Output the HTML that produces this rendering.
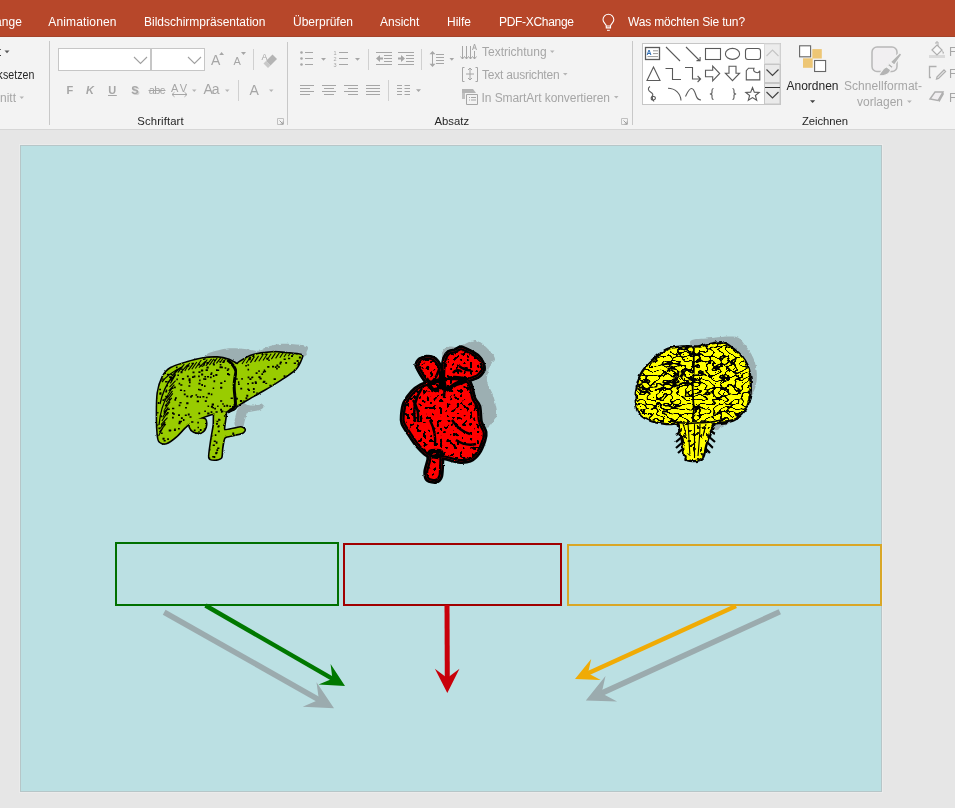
<!DOCTYPE html>
<html><head><meta charset="utf-8">
<style>
*{margin:0;padding:0;box-sizing:border-box}
html,body{width:955px;height:808px;overflow:hidden;background:#E6E6E6;font-family:"Liberation Sans",sans-serif}
#tabs{position:absolute;left:0;top:0;width:955px;height:37px;background:#B7472A;border-bottom:1px solid #A4432A;color:#fff;font-size:12px}
#tabs span{position:absolute;top:15px;white-space:nowrap}
#ribbon{position:absolute;left:0;top:37px;width:955px;height:93px;background:#F3F3F3;border-bottom:1px solid #D6D6D6}
.t{position:absolute;white-space:nowrap;font-size:12px;color:#262626}
.g{color:#A6A6A6}
.sep{position:absolute;width:1px;background:#C6C6C6}
.gl{position:absolute;font-size:11px;color:#262626;white-space:nowrap}
#slide{position:absolute;left:20px;top:145px;width:862px;height:647px;background:#BBE0E3;border:1px solid #B6C6C8;box-shadow:0 0 0 1px #EBEBEB}
svg{position:absolute;left:0;top:0;overflow:visible;will-change:transform}
#tabs{will-change:transform}
</style></head><body>
<div id="tabs">
<span style="left:-4.9px">ange</span>
<span style="left:48.3px;letter-spacing:0.15px">Animationen</span>
<span style="left:144px">Bildschirmpräsentation</span>
<span style="left:293px">Überprüfen</span>
<span style="left:380px">Ansicht</span>
<span style="left:447px">Hilfe</span>
<span style="left:499px;letter-spacing:-0.3px">PDF-XChange</span>
<span style="left:628px;letter-spacing:-0.17px">Was möchten Sie tun?</span>
<svg width="30" height="30" style="position:absolute;left:595px;top:8px" viewBox="595 8 30 30"><path d="M606.3 26c0-1.8-3.3-3.4-3.3-6.3a5.4 5.4 0 0 1 10.8 0c0 2.900-3.300 4.500-3.3 6.3z" fill="none" stroke="#fff" stroke-width="1.1"/><path d="M606.3 26v1.9h4.200v-1.9" fill="none" stroke="#fff" stroke-width="1.1"/><path d="M607 30.3h2.8" stroke="#fff" stroke-width="1"/></svg>
</div>
<div id="ribbon"></div>
<svg id="rib" width="955" height="130" viewBox="0 0 955 130" style="position:absolute;left:0;top:0">
<g font-family="Liberation Sans" font-size="12">
<!-- clipboard partial -->
<text x="1" y="56" fill="#262626" text-anchor="end">Layout</text>
<path d="M4.5 50.5h5l-2.5 2.8z" fill="#595959"/>
<text x="-3.3" y="78.6" fill="#262626">k</text><text x="3" y="78.6" fill="#262626" textLength="31.3" lengthAdjust="spacingAndGlyphs">setzen</text>
<text x="16" y="101.5" fill="#A6A6A6" text-anchor="end">Abschnitt</text>
<path d="M19.5 96.5h4.5l-2.25 2.6z" fill="#B5B5B5"/>
<rect x="49" y="41" width="1" height="84" fill="#C8C8C8"/>

<!-- Schriftart group -->
<rect x="58.5" y="48.5" width="92" height="22" fill="#fff" stroke="#C6C6C6"/>
<rect x="151.5" y="48.5" width="53" height="22" fill="#fff" stroke="#C6C6C6"/>
<path d="M134 57l6.5 6.5l6.5-6.5" fill="none" stroke="#A0A0A0" stroke-width="1.1"/>
<path d="M188 57l6.5 6.5l6.5-6.5" fill="none" stroke="#A0A0A0" stroke-width="1.1"/>
<text x="211" y="65.3" font-size="14" fill="#A6A6A6">A</text>
<path d="M219.2 55h4.8l-2.4-2.9z" fill="#A6A6A6"/>
<text x="233.5" y="65.3" font-size="11" fill="#A6A6A6">A</text>
<path d="M241 52h5l-2.5 2.9z" fill="#A6A6A6"/>
<rect x="253" y="49" width="1" height="21" fill="#D0D0D0"/>
<text x="261.5" y="60" font-size="9" fill="#A6A6A6">A</text>
<path d="M266 61l6.5-6.5l4.5 4.5l-6.5 6.5z" fill="#B4B4B4"/>
<path d="M263.5 63.5l2.5-2.5l4.5 4.5l-2.5 2.5z" fill="#C8C8C8"/>

<text x="66.5" y="93.8" font-size="11" font-weight="bold" fill="#A6A6A6">F</text>
<text x="86" y="93.8" font-size="11" font-weight="bold" font-style="italic" fill="#A6A6A6">K</text>
<text x="108.2" y="93.8" font-size="11" font-weight="bold" fill="#A6A6A6">U</text>
<rect x="108" y="95" width="8.8" height="1" fill="#A6A6A6"/>
<text x="132.5" y="95" font-size="11" font-weight="bold" fill="#D0D0D0">S</text>
<text x="131.3" y="93.8" font-size="11" font-weight="bold" fill="#A6A6A6">S</text>
<text x="148.8" y="93.8" font-size="11" fill="#A6A6A6" textLength="16.5">abc</text>
<rect x="148.5" y="90" width="17" height="1" fill="#A6A6A6"/>
<text x="171" y="92" font-size="11" fill="#A6A6A6" textLength="16">AV</text>
<path d="M172 94.5h15M174.5 92.2l-2.5 2.3l2.5 2.3M184.5 92.2l2.5 2.3l-2.5 2.3" fill="none" stroke="#A6A6A6" stroke-width="1"/>
<path d="M192 89.5h4.5l-2.25 2.5z" fill="#B5B5B5"/>
<text x="203.5" y="94" font-size="14" fill="#A6A6A6" textLength="16">Aa</text>
<path d="M225 89.5h4.5l-2.25 2.5z" fill="#B5B5B5"/>
<rect x="238" y="80" width="1" height="21" fill="#D0D0D0"/>
<text x="249.5" y="95.3" font-size="14" fill="#A6A6A6">A</text>
<path d="M269 89.5h4.5l-2.25 2.5z" fill="#B5B5B5"/>
<text x="137.3" y="124.8" font-size="11.3" fill="#262626" textLength="46.3">Schriftart</text>
<path d="M277.5 118.5h6v6h-6z" fill="none" stroke="#C0C0C0" stroke-width="1"/>
<path d="M279.5 120.5l3.5 3.5M283 121.5v2.5h-2.5" fill="none" stroke="#A0A0A0" stroke-width="1"/>
<rect x="287" y="42" width="1" height="83" fill="#C8C8C8"/>

<!-- Absatz group -->
<g fill="#A6A6A6">
<circle cx="301.5" cy="52.5" r="1.3"/><circle cx="301.5" cy="58.5" r="1.3"/><circle cx="301.5" cy="64.5" r="1.3"/>
<rect x="305" y="52" width="8" height="1"/><rect x="305" y="58" width="8" height="1"/><rect x="305" y="64" width="8" height="1"/>
<path d="M321 58h5l-2.5 2.8z"/>
<text x="333.5" y="55" font-size="5.5">1</text><text x="333.5" y="61" font-size="5.5">2</text><text x="333.5" y="67" font-size="5.5">3</text>
<rect x="339" y="52" width="9" height="1"/><rect x="339" y="58" width="9" height="1"/><rect x="339" y="64" width="9" height="1"/>
<path d="M355 58h5l-2.5 2.8z"/>
<rect x="368" y="49" width="1" height="21" fill="#D0D0D0"/>
<rect x="376" y="52" width="16" height="1"/><rect x="384" y="55" width="8" height="1"/><rect x="384" y="58" width="8" height="1"/><rect x="384" y="61" width="8" height="1"/><rect x="376" y="64" width="16" height="1"/>
<path d="M376 58.5l4-3.5v2.500h3v2h-3v2.500z"/>
<rect x="398" y="52" width="16" height="1"/><rect x="406" y="55" width="8" height="1"/><rect x="406" y="58" width="8" height="1"/><rect x="406" y="61" width="8" height="1"/><rect x="398" y="64" width="16" height="1"/>
<path d="M405 58.5l-4-3.5v2.500h-3v2h3v2.500z"/>
<rect x="421" y="49" width="1" height="21" fill="#D0D0D0"/><rect x="432" y="54" width="1" height="10" fill="#A6A6A6"/>
<path d="M432.5 51l-3 3.300h2.500v3h1v-3h2.500zM432.5 67l-3-3.300h2.500v-3h1v3h2.500z"/>
<rect x="436" y="54" width="8" height="1"/><rect x="436" y="57" width="8" height="1"/><rect x="436" y="60" width="8" height="1"/><rect x="436" y="63" width="8" height="1"/>
<path d="M449.5 58h4.6l-2.3 2.7z"/>

<rect x="300" y="85" width="14" height="1"/><rect x="300" y="88" width="10" height="1"/><rect x="300" y="91" width="14" height="1"/><rect x="300" y="94" width="10" height="1"/>
<rect x="322" y="85" width="14" height="1"/><rect x="324" y="88" width="10" height="1"/><rect x="322" y="91" width="14" height="1"/><rect x="324" y="94" width="10" height="1"/>
<rect x="344" y="85" width="14" height="1"/><rect x="348" y="88" width="10" height="1"/><rect x="344" y="91" width="14" height="1"/><rect x="348" y="94" width="10" height="1"/>
<rect x="366" y="85" width="14" height="1"/><rect x="366" y="88" width="14" height="1"/><rect x="366" y="91" width="14" height="1"/><rect x="366" y="94" width="14" height="1"/>
<rect x="388" y="80" width="1" height="21" fill="#D0D0D0"/>
<rect x="397" y="85" width="5" height="1"/><rect x="404.5" y="85" width="5.5" height="1"/><rect x="397" y="88" width="5" height="1"/><rect x="404.5" y="88" width="5.5" height="1"/><rect x="397" y="91" width="5" height="1"/><rect x="404.5" y="91" width="5.5" height="1"/><rect x="397" y="94" width="5" height="1"/><rect x="404.5" y="94" width="5.5" height="1"/>
<path d="M416 89.2h5l-2.5 2.8z"/>
</g>
<g fill="none" stroke="#A6A6A6" stroke-width="1">
<path d="M462.5 46v13M466.5 46v13M470.5 46v13M460.5 56.5l2 2.5l2-2.5M464.5 56.5l2 2.5l2-2.5M468.5 56.5l2 2.5l2-2.5M474.5 51v8M472.5 56.5l2 2.5l2-2.5"/>
<path d="M472.5 50l2-6l2 6M473.2 48h2.6"/>
<path d="M464.5 67.5h-2v14h2M475.5 67.5h2v14h-2M470 68v12M468 70l2-2l2 2M468 78l2 2l2-2M466 74h8"/>
<path d="M466.5 94.5h11v10h-11zM469 97.5h1M471 97.5h5M469 100h1M471 100h5"/>
</g>
<path d="M462 89h11l3 4h-14z" fill="#B4B4B4"/>
<rect x="462" y="93" width="3" height="6" fill="#C0C0C0"/>
<text x="482" y="56.3" fill="#A6A6A6" textLength="64.6">Textrichtung</text>
<path d="M550 50.5h4.5l-2.25 2.5z" fill="#B5B5B5"/>
<text x="482" y="78.8" fill="#A6A6A6" textLength="77.6">Text ausrichten</text>
<path d="M563 73h4.5l-2.25 2.5z" fill="#B5B5B5"/>
<text x="481.5" y="101.7" fill="#A6A6A6" textLength="128.5">In SmartArt konvertieren</text>
<path d="M614 96h4.5l-2.25 2.5z" fill="#B5B5B5"/>
<text x="434.5" y="124.7" font-size="11.3" fill="#262626">Absatz</text>
<path d="M621.5 118.5h6v6h-6z" fill="none" stroke="#C0C0C0" stroke-width="1"/>
<path d="M623.5 120.5l3.5 3.5M627 121.5v2.5h-2.5" fill="none" stroke="#A0A0A0" stroke-width="1"/>
<rect x="632" y="41" width="1" height="84" fill="#C8C8C8"/>
</g>
</svg>
<svg id="rib2" width="955" height="130" viewBox="0 0 955 130" style="position:absolute;left:0;top:0">
<g font-family="Liberation Sans" font-size="12">
<rect x="642.5" y="43.5" width="138" height="61" fill="#fff" stroke="#C6C6C6"/>
<rect x="764" y="44" width="16" height="60" fill="#F0F0F0"/>
<rect x="764.5" y="44" width="15.5" height="19.5" fill="#ECECEC" stroke="#DADADA"/>
<path d="M766.5 56l6-6l6 6" fill="none" stroke="#C4C4C4" stroke-width="1.1"/>
<rect x="764.5" y="64.5" width="15.5" height="18" fill="#EAEAEA" stroke="#C6C6C6"/>
<path d="M766.5 69.5l6 6l6-6" fill="none" stroke="#444" stroke-width="1.2"/>
<rect x="764.5" y="83.5" width="15.5" height="20.5" fill="#EAEAEA" stroke="#C6C6C6"/>
<rect x="765" y="87" width="15" height="1" fill="#333"/>
<path d="M766.5 92l6 6l6-6" fill="none" stroke="#444" stroke-width="1.2"/>
<g fill="none" stroke="#5A5A5A" stroke-width="1.1">
<rect x="645.5" y="47.5" width="14" height="12" stroke-width="1.3"/>
<path d="M666 47l14 14M686 47l14 14M696.5 60.6h3.6v-3.6"/>
<rect x="705.5" y="48.5" width="15" height="11"/>
<ellipse cx="732.5" cy="53.9" rx="7.1" ry="5.5"/>
<rect x="745.5" y="48.5" width="15" height="11" rx="2.5"/>
<path d="M653.5 67l-6.5 13.5h13z"/>
<path d="M665.5 68.5h7v11h8.5"/>
<path d="M685 67.5h7.5v11.5h8M697.6 76l3 3l-3 3"/>
<path d="M705.5 70.2h7.2v-4l7 7.3l-7 7.3v-4h-7.2z"/>
<path d="M729 66.2h7v7h3.6l-7.1 7.5l-7.1-7.5h3.6z"/>
<path d="M748.5 68.2h5.5a3 3 0 0 0 5.8 2.5v9.2h-13.5v-9.2z"/>
<path d="M650 86.5c-2.500 1.500-2 4 .5 5.500s3 3 1.500 4.500s-1 4 1.500 3.500s2.500-3 .500-3.500s-2.500 2 0 5M668 88.3c7 0 12.5 5 13 12.2" />
<path d="M685.5 96.5c2-4 3.5-8 6-8s3.5 4 4.5 7s2 4.5 5 4.5"/>
<path d="M713.5 88.5c-1.2 0-1.5.6-1.5 2v2.5l-1.5 1l1.5 1v2.5c0 1.4.3 2 1.5 2M732.5 88.5c1.2 0 1.5.6 1.5 2v2.5l1.5 1l-1.5 1v2.5c0 1.4-.3 2-1.5 2"/>
<path d="M752.5 87.5l1.8 4.6l4.9.3l-3.8 3.1l1.3 4.8l-4.2-2.7l-4.2 2.7l1.3-4.8l-3.8-3.1l4.9-.3z"/>
</g>
<text x="646.5" y="54.5" font-size="7" font-weight="bold" fill="#2E6DB4">A</text>
<path d="M653 50.8h5M653 53.6h5M647.5 56.6h10.5" stroke="#9A9A9A" stroke-width="1"/>

<!-- Anordnen -->
<rect x="812.3" y="49.1" width="9.5" height="9.4" fill="#EDC675"/><rect x="803" y="58.3" width="9.7" height="9.5" fill="#EDC675"/>
<rect x="799.6" y="45.8" width="11" height="11" fill="#fff" stroke="#666" stroke-width="1.1"/>
<rect x="814.6" y="60.5" width="11" height="11" fill="#fff" stroke="#666" stroke-width="1.1"/>
<text x="786.5" y="90.4" fill="#262626">Anordnen</text>
<path d="M810 100.3h5.2l-2.6 2.8z" fill="#444"/>
<!-- Schnellformat -->
<rect x="872" y="47" width="25" height="24.5" rx="5" fill="#F1EFF1" stroke="#B8B8B8" stroke-width="1.5"/>
<path d="M900 52.5l1.8 2.2l-7.500 10.300l-4-3z" fill="#B4B4B4" stroke="#F3F3F3" stroke-width="1.2"/>
<path d="M889 63.5l4 3l-1.300 1.800l-4-3z" fill="#B4B4B4" stroke="#F3F3F3" stroke-width="1"/><path d="M886.5 66.800l4.200 3.100c-1 3-3.500 5-7 5.600l-5.500.300c2.500-2 3-7 8.300-9z" fill="#B4B4B4" stroke="#F3F3F3" stroke-width="1.1"/>
<text x="844" y="90.2" fill="#A6A6A6" textLength="78">Schnellformat-</text>
<text x="857" y="105.6" fill="#A6A6A6">vorlagen</text>
<path d="M907 100.4h4.8l-2.4 2.6z" fill="#B5B5B5"/>
<text x="802" y="124.8" font-size="11.3" fill="#262626" textLength="46">Zeichnen</text>
<!-- right partial -->
<rect x="929" y="55" width="16" height="3" fill="#DADADA"/>
<path d="M932 50l5-5l5 5l-5 5z" fill="#F8F8F8" stroke="#AFAFAF" stroke-width="1.2"/>
<path d="M936 44v-2h2v4" fill="none" stroke="#AFAFAF" stroke-width="1"/>
<path d="M942 50l2 2.5l-1 2z" fill="#AFAFAF"/>
<path d="M936.5 66.5h-7v11h1.5M937 77l7-7l1.5 1.5l-7 7l-2 .5z" fill="none" stroke="#AFAFAF" stroke-width="1.3"/>
<path d="M930 99l5-7h8l-5 8.5z" fill="#F0EEF0" stroke="#AFAFAF" stroke-width="1.4"/>
<path d="M938 100.5l5-8.5l1 2l-4.5 8z" fill="#AFAFAF"/>
<text x="949" y="56" fill="#A6A6A6">Fülleffekt</text>
<text x="949" y="78.3" fill="#A6A6A6">Formkontur</text>
<text x="949" y="101.7" fill="#A6A6A6">Formeffekte</text>
</g>
</svg>
<div id="slide"></div>
<svg width="955" height="808" viewBox="0 0 955 808" id="main">
<g id="boxes">
<rect x="116" y="543" width="222" height="62" fill="none" stroke="#007000" stroke-width="2"/>
<rect x="344" y="544" width="217" height="61" fill="none" stroke="#A00000" stroke-width="2"/>
<rect x="568" y="545" width="313" height="60" fill="none" stroke="#D9A727" stroke-width="2"/>
<line x1="164.2" y1="612.2" x2="321.3" y2="701.1" stroke="#9BABAE" stroke-width="5.6"/><path d="M334.0 708.3L302.7 706.7L318.9 699.7L316.5 682.3z" fill="#9BABAE"/>
<line x1="779.8" y1="611.8" x2="599.0" y2="694.4" stroke="#9BABAE" stroke-width="5.6"/><path d="M585.8 700.4L605.5 676.0L601.6 693.2L617.1 701.5z" fill="#9BABAE"/>
<line x1="205.5" y1="605.5" x2="334.4" y2="679.9" stroke="#007800" stroke-width="4.5"/><path d="M345.0 686.0L318.6 684.6L332.4 678.7L330.6 663.9z" fill="#007800"/>
<line x1="447.0" y1="605.0" x2="447.3" y2="680.4" stroke="#C8000A" stroke-width="5"/><path d="M447.3 693.0L434.9 668.7L447.2 677.9L459.5 668.7z" fill="#C8000A"/>
<line x1="736.0" y1="606.0" x2="585.9" y2="674.2" stroke="#F0AB05" stroke-width="4.5"/><path d="M575.0 679.1L591.2 659.1L588.0 673.2L600.7 680.1z" fill="#F0AB05"/>
</g>
<g id="organs">
<defs>
<filter id="rough" x="-10%" y="-10%" width="120%" height="120%"><feTurbulence type="fractalNoise" baseFrequency="0.9" numOctaves="1" seed="2"/><feDisplacementMap in="SourceGraphic" scale="2.2" xChannelSelector="R" yChannelSelector="G"/></filter>
<filter id="rough2" x="-10%" y="-10%" width="120%" height="120%"><feTurbulence type="fractalNoise" baseFrequency="0.25" numOctaves="2" seed="5"/><feDisplacementMap in="SourceGraphic" scale="3" xChannelSelector="R" yChannelSelector="G"/></filter>
<filter id="dots" x="0" y="0" width="100%" height="100%"><feTurbulence type="fractalNoise" baseFrequency="0.55" numOctaves="1" seed="11"/><feColorMatrix type="matrix" values="0 0 0 0 0 0 0 0 0 0 0 0 0 0 0 30 0 0 0 -19.2"/></filter>
<filter id="blots" x="0" y="0" width="100%" height="100%"><feTurbulence type="fractalNoise" baseFrequency="0.3" numOctaves="1" seed="4"/><feColorMatrix type="matrix" values="0 0 0 0 0 0 0 0 0 0 0 0 0 0 0 30 0 0 0 -17.4"/></filter>
<filter id="gyri" x="0" y="0" width="100%" height="100%"><feTurbulence type="turbulence" baseFrequency="0.14 0.21" numOctaves="1" seed="5"/><feColorMatrix type="matrix" values="0 0 0 0 0 0 0 0 0 0 0 0 0 0 0 -20 0 0 0 2.4"/></filter><filter id="bumpy" x="-10%" y="-10%" width="120%" height="120%"><feTurbulence type="fractalNoise" baseFrequency="0.22" numOctaves="1" seed="12"/><feDisplacementMap in="SourceGraphic" scale="4.5" xChannelSelector="R" yChannelSelector="G"/></filter>
</defs>
<path d="M205.7 355.7C205.7 353.9 210.9 352.2 215.0 351.0C219.1 349.8 225.0 348.5 230.0 348.2C235.0 347.9 240.2 348.6 245.0 349.0C249.8 349.4 254.8 351.2 259.0 350.7C263.2 350.2 266.0 347.1 270.0 346.0C274.0 344.9 278.7 344.1 283.0 343.8C287.3 343.6 292.2 344.2 296.0 344.5C299.8 344.8 303.5 345.2 305.5 345.7C307.5 346.2 307.8 346.6 308.0 347.6C308.2 348.7 307.1 350.5 306.5 352.0C305.9 353.5 308.7 354.7 304.3 356.4C299.9 358.1 290.7 360.7 280.0 362.0C269.3 363.3 250.8 364.0 240.0 364.0C229.2 364.0 220.7 363.4 215.0 362.0C209.3 360.6 205.7 357.5 205.7 355.7z" fill="#9CAFB2" filter="url(#rough2)"/>
<path d="M239.0 406.0C240.2 404.1 242.8 401.6 244.0 401.5C245.2 401.4 245.3 404.4 247.0 405.0C248.7 405.6 252.9 405.6 255.0 405.5C257.1 405.4 259.7 404.3 261.0 404.5C262.3 404.7 263.6 406.2 263.5 407.0C263.4 407.8 261.7 409.3 260.0 410.0C258.3 410.7 253.9 411.1 252.0 411.5C250.1 411.9 248.6 411.7 247.5 413.0C246.4 414.3 245.7 417.9 245.0 420.0C244.3 422.1 244.1 425.7 243.0 427.0C241.9 428.3 239.3 428.9 238.0 428.5C236.7 428.1 234.8 426.2 234.5 424.0C234.2 421.8 235.3 416.7 236.0 414.0C236.7 411.3 237.8 407.9 239.0 406.0z" fill="#9CAFB2" filter="url(#rough2)"/>
<clipPath id="lvc"><path d="M191.0 421.0C192.3 419.7 195.7 419.2 198.0 419.0C200.3 418.8 203.8 418.2 205.0 419.5C206.2 420.8 206.2 424.9 205.5 427.0C204.8 429.1 202.9 431.6 201.0 432.4C199.1 433.1 195.8 432.4 194.0 431.5C192.2 430.6 190.5 428.8 190.0 427.0C189.5 425.2 189.7 422.3 191.0 421.0z"/><path d="M215.0 412.0C216.3 410.5 224.4 410.0 225.5 412.0C226.6 414.0 223.1 427.5 224.0 429.5C224.9 431.5 231.1 429.2 233.0 429.0C234.9 428.8 239.4 427.4 240.7 427.5C242.0 427.6 244.3 428.9 244.5 429.5C244.7 430.1 243.8 431.9 242.5 432.5C241.2 433.1 235.1 434.4 233.0 435.0C230.9 435.6 225.8 436.0 224.5 437.5C223.2 439.0 222.4 445.7 222.0 448.0C221.6 450.3 221.8 456.2 221.0 457.5C220.2 458.8 216.3 459.5 215.0 459.5C213.7 459.5 209.9 459.8 209.5 457.5C209.1 455.2 211.0 443.8 211.5 440.0C212.0 436.2 213.6 428.3 214.0 425.0C214.4 421.7 213.7 413.5 215.0 412.0z"/><path d="M158.0 435.0C157.6 431.4 157.2 423.6 157.2 417.3C157.2 411.0 157.1 399.1 158.0 393.1C158.9 387.1 161.0 380.7 162.9 377.0C164.8 373.3 167.4 370.4 171.0 368.2C174.6 366.0 182.2 364.0 187.0 362.5C191.8 361.0 198.5 359.2 203.1 358.5C207.7 357.8 213.7 357.5 217.6 357.7C221.5 357.9 226.0 359.1 228.9 360.1C231.8 361.1 235.4 363.9 237.0 364.2C238.6 364.5 237.2 363.6 239.5 362.3C241.8 361.0 247.6 357.0 252.5 355.5C257.4 354.0 266.7 352.8 272.0 352.5C277.3 352.2 283.3 353.1 287.6 353.5C291.9 353.9 298.6 354.4 300.6 355.1C302.6 355.8 302.0 356.3 301.2 358.4C300.4 360.5 298.4 365.7 295.4 368.8C292.4 371.9 285.8 376.1 281.1 379.2C276.4 382.3 269.5 386.5 264.2 389.6C258.9 392.7 250.1 397.6 246.0 400.0C241.9 402.4 238.7 404.4 236.9 405.8C235.1 407.2 236.1 408.2 233.7 409.2C231.3 410.2 224.2 411.8 220.8 412.5C217.4 413.2 214.6 413.0 211.2 414.0C207.8 415.0 201.9 417.2 198.3 418.9C194.7 420.6 190.4 422.6 187.0 425.3C183.6 428.0 178.9 433.9 175.8 436.6C172.7 439.3 168.5 442.3 166.1 443.0C163.7 443.7 160.9 442.6 159.7 441.4C158.5 440.2 158.4 438.6 158.0 435.0z"/></clipPath>
<g fill="#000" stroke="#000" stroke-width="3.2" filter="url(#rough)"><path d="M191.0 421.0C192.3 419.7 195.7 419.2 198.0 419.0C200.3 418.8 203.8 418.2 205.0 419.5C206.2 420.8 206.2 424.9 205.5 427.0C204.8 429.1 202.9 431.6 201.0 432.4C199.1 433.1 195.8 432.4 194.0 431.5C192.2 430.6 190.5 428.8 190.0 427.0C189.5 425.2 189.7 422.3 191.0 421.0z"/><path d="M215.0 412.0C216.3 410.5 224.4 410.0 225.5 412.0C226.6 414.0 223.1 427.5 224.0 429.5C224.9 431.5 231.1 429.2 233.0 429.0C234.9 428.8 239.4 427.4 240.7 427.5C242.0 427.6 244.3 428.9 244.5 429.5C244.7 430.1 243.8 431.9 242.5 432.5C241.2 433.1 235.1 434.4 233.0 435.0C230.9 435.6 225.8 436.0 224.5 437.5C223.2 439.0 222.4 445.7 222.0 448.0C221.6 450.3 221.8 456.2 221.0 457.5C220.2 458.8 216.3 459.5 215.0 459.5C213.7 459.5 209.9 459.8 209.5 457.5C209.1 455.2 211.0 443.8 211.5 440.0C212.0 436.2 213.6 428.3 214.0 425.0C214.4 421.7 213.7 413.5 215.0 412.0z"/><path d="M158.0 435.0C157.6 431.4 157.2 423.6 157.2 417.3C157.2 411.0 157.1 399.1 158.0 393.1C158.9 387.1 161.0 380.7 162.9 377.0C164.8 373.3 167.4 370.4 171.0 368.2C174.6 366.0 182.2 364.0 187.0 362.5C191.8 361.0 198.5 359.2 203.1 358.5C207.7 357.8 213.7 357.5 217.6 357.7C221.5 357.9 226.0 359.1 228.9 360.1C231.8 361.1 235.4 363.9 237.0 364.2C238.6 364.5 237.2 363.6 239.5 362.3C241.8 361.0 247.6 357.0 252.5 355.5C257.4 354.0 266.7 352.8 272.0 352.5C277.3 352.2 283.3 353.1 287.6 353.5C291.9 353.9 298.6 354.4 300.6 355.1C302.6 355.8 302.0 356.3 301.2 358.4C300.4 360.5 298.4 365.7 295.4 368.8C292.4 371.9 285.8 376.1 281.1 379.2C276.4 382.3 269.5 386.5 264.2 389.6C258.9 392.7 250.1 397.6 246.0 400.0C241.9 402.4 238.7 404.4 236.9 405.8C235.1 407.2 236.1 408.2 233.7 409.2C231.3 410.2 224.2 411.8 220.8 412.5C217.4 413.2 214.6 413.0 211.2 414.0C207.8 415.0 201.9 417.2 198.3 418.9C194.7 420.6 190.4 422.6 187.0 425.3C183.6 428.0 178.9 433.9 175.8 436.6C172.7 439.3 168.5 442.3 166.1 443.0C163.7 443.7 160.9 442.6 159.7 441.4C158.5 440.2 158.4 438.6 158.0 435.0z"/></g>
<g fill="#99CC00" filter="url(#rough)"><path d="M191.0 421.0C192.3 419.7 195.7 419.2 198.0 419.0C200.3 418.8 203.8 418.2 205.0 419.5C206.2 420.8 206.2 424.9 205.5 427.0C204.8 429.1 202.9 431.6 201.0 432.4C199.1 433.1 195.8 432.4 194.0 431.5C192.2 430.6 190.5 428.8 190.0 427.0C189.5 425.2 189.7 422.3 191.0 421.0z"/><path d="M215.0 412.0C216.3 410.5 224.4 410.0 225.5 412.0C226.6 414.0 223.1 427.5 224.0 429.5C224.9 431.5 231.1 429.2 233.0 429.0C234.9 428.8 239.4 427.4 240.7 427.5C242.0 427.6 244.3 428.9 244.5 429.5C244.7 430.1 243.8 431.9 242.5 432.5C241.2 433.1 235.1 434.4 233.0 435.0C230.9 435.6 225.8 436.0 224.5 437.5C223.2 439.0 222.4 445.7 222.0 448.0C221.6 450.3 221.8 456.2 221.0 457.5C220.2 458.8 216.3 459.5 215.0 459.5C213.7 459.5 209.9 459.8 209.5 457.5C209.1 455.2 211.0 443.8 211.5 440.0C212.0 436.2 213.6 428.3 214.0 425.0C214.4 421.7 213.7 413.5 215.0 412.0z"/><path d="M158.0 435.0C157.6 431.4 157.2 423.6 157.2 417.3C157.2 411.0 157.1 399.1 158.0 393.1C158.9 387.1 161.0 380.7 162.9 377.0C164.8 373.3 167.4 370.4 171.0 368.2C174.6 366.0 182.2 364.0 187.0 362.5C191.8 361.0 198.5 359.2 203.1 358.5C207.7 357.8 213.7 357.5 217.6 357.7C221.5 357.9 226.0 359.1 228.9 360.1C231.8 361.1 235.4 363.9 237.0 364.2C238.6 364.5 237.2 363.6 239.5 362.3C241.8 361.0 247.6 357.0 252.5 355.5C257.4 354.0 266.7 352.8 272.0 352.5C277.3 352.2 283.3 353.1 287.6 353.5C291.9 353.9 298.6 354.4 300.6 355.1C302.6 355.8 302.0 356.3 301.2 358.4C300.4 360.5 298.4 365.7 295.4 368.8C292.4 371.9 285.8 376.1 281.1 379.2C276.4 382.3 269.5 386.5 264.2 389.6C258.9 392.7 250.1 397.6 246.0 400.0C241.9 402.4 238.7 404.4 236.9 405.8C235.1 407.2 236.1 408.2 233.7 409.2C231.3 410.2 224.2 411.8 220.8 412.5C217.4 413.2 214.6 413.0 211.2 414.0C207.8 415.0 201.9 417.2 198.3 418.9C194.7 420.6 190.4 422.6 187.0 425.3C183.6 428.0 178.9 433.9 175.8 436.6C172.7 439.3 168.5 442.3 166.1 443.0C163.7 443.7 160.9 442.6 159.7 441.4C158.5 440.2 158.4 438.6 158.0 435.0z"/></g>
<path d="M200.2 365.2h2.0v1.4h-2.0zM233.1 389.7h1.5v1.7h-1.5zM155.8 397.4h1.6v1.5h-1.6zM215.8 442.3h1.6v1.5h-1.6zM247.3 456.0h2.0v1.6h-2.0zM301.3 353.3h2.2v1.6h-2.2zM172.4 361.4h1.7v1.9h-1.7zM178.0 414.3h2.0v1.6h-2.0zM234.9 355.2h1.5v1.5h-1.5zM255.5 396.7h1.8v1.8h-1.8zM220.2 382.2h2.1v1.8h-2.1zM187.8 413.5h1.9v1.9h-1.9zM263.1 380.8h2.3v1.5h-2.3zM214.8 434.3h1.6v1.7h-1.6zM156.1 424.2h2.1v1.7h-2.1zM285.7 383.8h2.1v1.8h-2.1zM239.9 400.0h2.2v2.0h-2.2zM223.5 423.7h1.5v1.8h-1.5zM250.3 461.2h2.2v1.6h-2.2zM209.8 424.2h1.5v1.7h-1.5zM176.0 361.3h1.5v1.9h-1.5zM170.0 376.2h1.8v1.9h-1.8zM162.5 399.2h1.9v1.9h-1.9zM277.0 446.5h1.7v1.6h-1.7zM205.6 448.8h2.3v1.5h-2.3zM177.3 374.4h1.7v1.7h-1.7zM241.3 378.0h1.5v1.7h-1.5zM207.2 412.6h2.3v1.8h-2.3zM229.9 418.4h2.0v1.4h-2.0zM289.4 436.9h2.2v1.9h-2.2zM210.8 393.5h1.6v1.8h-1.6zM159.6 355.7h1.7v1.5h-1.7zM202.7 354.0h1.5v1.5h-1.5zM165.7 389.5h1.5v1.9h-1.5zM245.2 364.9h1.7v1.6h-1.7zM206.4 362.0h2.2v2.0h-2.2zM222.2 403.2h1.6v1.5h-1.6zM203.1 378.2h2.2v1.5h-2.2zM153.6 456.4h1.9v1.5h-1.9zM234.2 351.1h1.9v2.0h-1.9zM283.8 427.4h1.7v1.6h-1.7zM175.9 436.0h1.9v1.9h-1.9zM201.1 373.4h2.1v2.0h-2.1zM282.2 439.9h2.2v1.8h-2.2zM185.1 407.0h1.8v1.4h-1.8zM154.3 379.9h1.7v1.8h-1.7zM298.3 399.0h2.2v2.0h-2.2zM298.0 389.6h1.7v1.5h-1.7zM180.5 371.3h2.0v1.9h-2.0zM280.3 402.7h2.0v1.9h-2.0zM163.1 423.3h2.2v1.9h-2.2zM266.3 402.5h1.6v1.9h-1.6zM201.5 439.3h2.3v1.6h-2.3zM212.2 455.9h2.1v1.5h-2.1zM169.7 365.2h2.2v1.9h-2.2zM172.7 442.2h2.3v1.8h-2.3zM204.3 410.5h1.6v1.4h-1.6zM300.5 422.1h1.9v2.0h-1.9zM217.2 447.4h2.2v1.5h-2.2zM189.0 381.4h1.7v1.8h-1.7zM190.2 395.8h1.6v1.9h-1.6zM204.8 400.2h2.0v1.9h-2.0zM215.2 452.6h1.9v1.7h-1.9zM231.1 350.1h1.9v1.5h-1.9zM150.6 439.1h1.6v1.7h-1.6zM262.4 411.4h1.8v1.7h-1.8zM236.1 437.4h1.6v1.7h-1.6zM188.5 379.6h2.1v1.7h-2.1zM237.1 434.6h2.2v1.7h-2.2zM244.9 405.6h1.9v1.8h-1.9zM220.1 408.8h1.9v2.0h-1.9zM258.4 447.9h2.3v1.6h-2.3zM236.7 455.5h2.2v1.5h-2.2zM168.9 398.4h1.6v1.5h-1.6zM161.3 424.3h2.1v1.9h-2.1zM173.9 429.6h2.0v1.5h-2.0zM286.8 458.3h1.7v2.0h-1.7zM211.7 403.5h2.3v1.9h-2.3zM175.0 397.2h1.9v1.6h-1.9zM180.3 384.3h2.1v1.4h-2.1zM235.9 398.2h1.5v1.6h-1.5zM246.7 406.4h1.6v2.0h-1.6zM272.2 458.8h1.6v1.6h-1.6zM156.1 436.8h1.7v1.5h-1.7zM215.4 451.9h2.2v1.6h-2.2zM173.2 452.8h2.0v1.8h-2.0zM163.9 354.6h2.1v1.7h-2.1zM161.2 455.0h2.0v1.9h-2.0zM163.0 445.6h1.6v1.9h-1.6zM220.3 386.7h1.9v2.0h-1.9zM191.5 362.7h1.9v1.5h-1.9zM167.0 366.4h1.5v1.5h-1.5zM198.4 382.8h2.1v1.6h-2.1zM227.5 368.3h1.8v1.4h-1.8zM188.8 349.7h2.1v1.7h-2.1zM179.4 402.1h2.2v1.5h-2.2zM276.9 397.3h1.9v1.9h-1.9zM210.9 405.8h2.1v2.0h-2.1zM203.1 442.9h2.1v1.8h-2.1zM212.7 387.6h1.5v1.5h-1.5zM161.0 432.5h1.7v1.5h-1.7zM163.1 443.9h2.2v1.8h-2.2zM193.7 375.6h1.7v1.7h-1.7zM174.4 398.8h1.7v2.0h-1.7zM300.8 410.4h1.7v2.0h-1.7zM198.0 388.7h1.5v1.6h-1.5zM223.6 405.3h1.7v1.7h-1.7zM150.8 378.1h1.6v1.6h-1.6zM156.5 350.6h1.7v1.5h-1.7zM240.8 408.3h2.1v1.8h-2.1zM261.0 448.2h1.8v1.6h-1.8zM302.6 365.0h2.1v1.8h-2.1zM156.8 443.2h2.2v1.8h-2.2zM263.7 440.6h1.6v1.7h-1.6zM228.2 443.2h2.1v1.9h-2.1zM240.5 449.8h2.0v1.8h-2.0zM185.6 351.6h1.6v1.6h-1.6zM166.3 443.3h1.9v1.8h-1.9zM247.1 425.6h1.9v1.4h-1.9zM273.6 433.3h1.9v1.7h-1.9zM252.2 355.5h2.1v1.6h-2.1zM161.5 378.3h2.1v1.5h-2.1zM264.7 459.2h1.9v1.6h-1.9zM224.2 425.9h2.1v1.8h-2.1zM249.6 356.8h1.6v1.6h-1.6zM265.2 382.7h2.0v1.4h-2.0zM159.4 378.6h2.0v1.8h-2.0zM254.7 381.2h1.9v1.7h-1.9zM222.3 361.5h2.2v1.5h-2.2zM301.6 454.7h1.5v1.7h-1.5zM277.1 458.4h1.9v1.6h-1.9zM182.5 455.8h1.7v1.7h-1.7zM172.0 407.7h2.3v1.5h-2.3zM277.1 406.0h2.2v1.8h-2.2zM185.9 450.3h1.9v1.4h-1.9zM150.6 404.1h1.9v1.6h-1.9zM171.8 387.2h1.8v1.9h-1.8zM150.3 433.6h2.2v1.5h-2.2zM293.6 429.3h2.2v1.6h-2.2zM207.7 392.8h2.3v1.8h-2.3zM205.9 396.8h1.7v1.4h-1.7zM165.8 443.2h1.7v2.0h-1.7zM188.6 378.3h1.9v1.5h-1.9zM207.9 457.0h2.2v1.9h-2.2zM247.8 452.1h2.3v1.7h-2.3zM261.5 353.6h2.1v1.7h-2.1zM266.7 421.5h1.7v1.4h-1.7zM293.7 362.5h1.9v1.6h-1.9zM196.2 432.2h2.3v1.6h-2.3zM251.7 382.3h1.9v1.6h-1.9zM175.9 366.4h1.7v1.9h-1.7zM227.0 373.1h2.2v2.0h-2.2zM219.7 363.9h1.7v1.5h-1.7zM203.0 358.4h1.7v1.6h-1.7zM238.3 449.1h2.1v1.6h-2.1zM214.2 407.8h1.8v1.6h-1.8zM159.6 379.6h2.3v1.5h-2.3zM228.0 419.8h2.2v1.5h-2.2zM192.0 376.3h1.8v1.7h-1.8zM297.9 444.7h2.2v1.4h-2.2zM155.0 428.9h2.2v1.7h-2.2zM241.0 348.0h1.8v2.0h-1.8zM278.0 445.5h2.3v1.5h-2.3zM166.9 365.6h1.9v1.8h-1.9zM295.9 430.3h2.0v1.9h-2.0zM220.9 410.9h1.5v1.9h-1.5zM186.0 452.9h2.0v1.6h-2.0zM169.8 376.7h2.0v1.8h-2.0zM167.4 356.0h1.9v1.7h-1.9zM210.2 373.5h2.0v1.4h-2.0zM196.7 400.5h2.3v1.8h-2.3zM287.0 402.2h1.7v1.5h-1.7zM298.9 428.3h1.7v1.4h-1.7zM227.2 424.9h1.8v1.6h-1.8zM253.4 453.5h1.7v1.4h-1.7zM202.4 395.9h2.0v1.5h-2.0zM273.5 432.3h1.9v1.5h-1.9zM300.3 383.5h2.2v1.5h-2.2zM184.3 434.7h1.7v2.0h-1.7zM226.8 369.4h1.7v1.7h-1.7zM253.1 456.2h1.6v1.6h-1.6zM183.0 459.0h1.6v1.4h-1.6zM159.3 392.8h2.2v1.9h-2.2zM263.6 461.7h2.2v1.6h-2.2zM178.8 454.7h2.1v1.4h-2.1zM253.0 391.2h1.8v1.6h-1.8zM176.2 348.3h1.7v1.6h-1.7zM298.1 362.1h2.3v1.5h-2.3zM205.3 441.7h2.2v1.7h-2.2zM157.6 402.0h1.8v2.0h-1.8zM179.9 389.5h2.2v1.4h-2.2zM213.7 440.5h2.1v1.4h-2.1zM155.4 355.1h2.2v1.6h-2.2zM265.8 450.4h1.8v1.6h-1.8zM298.4 418.3h1.7v1.8h-1.7zM199.1 379.4h1.5v1.9h-1.5zM292.1 420.3h2.3v1.4h-2.3zM186.2 402.2h2.3v2.0h-2.3zM209.9 376.6h1.8v1.7h-1.8zM293.9 368.9h2.1v1.8h-2.1zM277.5 436.1h2.0v1.6h-2.0zM199.5 389.3h2.1v1.4h-2.1zM180.6 433.8h1.7v1.4h-1.7zM155.2 411.0h1.8v2.0h-1.8zM286.9 460.6h1.7v1.5h-1.7zM164.9 404.8h2.1v1.7h-2.1zM186.3 395.5h2.0v1.8h-2.0zM265.9 444.6h2.0v1.5h-2.0zM280.3 381.5h2.0v1.6h-2.0zM264.4 370.7h1.7v1.5h-1.7zM173.8 448.8h2.0v1.6h-2.0zM211.4 461.1h1.9v1.5h-1.9zM275.3 422.5h2.3v1.5h-2.3zM223.6 441.4h2.2v1.9h-2.2zM156.3 381.5h1.6v1.5h-1.6zM300.8 414.5h2.2v1.6h-2.2zM284.2 399.2h1.7v1.9h-1.7zM296.6 360.1h2.0v1.8h-2.0zM183.7 390.0h1.6v1.5h-1.6zM189.5 416.3h2.0v1.5h-2.0zM151.8 385.3h2.0v1.5h-2.0zM198.4 371.2h2.1v1.7h-2.1zM159.8 359.6h1.8v1.7h-1.8zM249.1 358.4h1.6v1.8h-1.6zM213.5 380.3h1.7v2.0h-1.7zM198.4 412.6h1.8v1.6h-1.8zM284.0 461.6h1.8v1.5h-1.8zM262.8 371.2h1.5v1.9h-1.5zM215.7 441.5h1.8v1.9h-1.8zM221.4 366.5h1.5v1.7h-1.5zM249.3 451.7h1.6v1.8h-1.6zM207.5 405.5h1.6v1.6h-1.6zM230.8 453.5h1.6v1.7h-1.6zM274.7 458.2h1.7v1.5h-1.7zM296.2 459.2h1.9v1.4h-1.9zM293.6 392.2h2.2v1.8h-2.2zM277.8 366.3h2.1v1.5h-2.1zM212.7 444.5h2.2v1.5h-2.2zM183.8 393.6h1.9v1.6h-1.9zM169.1 376.2h2.1v1.9h-2.1zM156.4 412.1h2.1v1.4h-2.1zM279.9 361.4h2.0v1.7h-2.0zM247.2 382.9h1.8v1.7h-1.8zM216.0 423.1h1.9v1.7h-1.9zM153.6 418.6h1.9v1.5h-1.9zM268.4 436.9h1.9v1.5h-1.9zM223.3 360.2h1.6v1.7h-1.6zM164.2 398.4h1.9v1.4h-1.9zM248.6 357.4h2.1v1.9h-2.1zM229.3 354.2h1.9v1.6h-1.9zM297.4 363.5h2.2v2.0h-2.2zM263.5 440.9h1.7v2.0h-1.7zM226.2 457.1h2.2v1.5h-2.2zM272.2 454.1h1.6v1.6h-1.6zM267.2 366.1h2.2v1.6h-2.2zM276.4 364.4h1.9v2.0h-1.9zM182.3 378.0h1.9v1.6h-1.9zM155.7 368.8h1.6v2.0h-1.6zM255.4 450.1h1.6v1.9h-1.6zM167.8 408.5h2.0v1.6h-2.0zM285.3 411.3h2.0v1.9h-2.0zM166.2 461.2h2.0v1.6h-2.0zM273.6 378.2h2.3v1.7h-2.3zM205.8 435.2h1.9v1.5h-1.9zM265.3 353.5h2.2v1.6h-2.2zM249.1 460.2h2.0v1.8h-2.0zM198.5 348.2h1.5v1.5h-1.5zM245.5 397.3h1.9v1.9h-1.9zM170.5 373.9h2.0v1.4h-2.0zM150.4 388.5h1.6v1.6h-1.6zM184.8 414.5h2.0v1.5h-2.0zM246.7 402.1h1.6v2.0h-1.6zM187.8 365.0h1.6v1.8h-1.6zM285.0 437.2h1.8v1.6h-1.8zM151.8 421.5h1.9v1.6h-1.9zM250.1 398.6h2.2v1.8h-2.2zM188.5 451.0h1.5v1.7h-1.5zM212.9 375.1h1.5v1.9h-1.5zM151.9 410.8h2.3v1.5h-2.3zM180.9 417.3h1.9v1.8h-1.9zM276.1 367.9h1.7v1.6h-1.7zM157.5 449.4h2.1v1.8h-2.1zM151.0 444.3h2.1v1.7h-2.1zM265.0 399.6h1.7v1.5h-1.7zM186.0 352.4h1.8v1.8h-1.8zM257.7 444.4h2.1v1.6h-2.1zM235.8 397.7h2.1v1.7h-2.1zM191.1 421.2h2.3v1.5h-2.3zM286.4 349.7h1.7v1.5h-1.7zM265.3 455.7h2.1v1.6h-2.1zM286.4 385.5h1.7v1.9h-1.7zM247.8 427.0h2.0v2.0h-2.0zM222.8 443.7h2.1v1.9h-2.1zM217.8 430.6h2.0v1.6h-2.0zM182.9 419.0h1.6v1.9h-1.6zM172.4 351.1h1.6v2.0h-1.6zM203.5 364.2h1.5v1.4h-1.5zM257.4 420.3h2.1v1.8h-2.1zM160.2 415.3h1.8v1.9h-1.8zM277.0 449.6h1.6v1.9h-1.6zM291.7 455.7h1.6v1.5h-1.6zM167.4 351.9h2.2v1.9h-2.2zM248.3 442.1h2.0v1.6h-2.0zM165.5 359.2h2.1v1.5h-2.1zM199.5 396.3h1.5v1.6h-1.5zM193.8 429.6h1.8v1.6h-1.8zM299.4 405.4h2.2v1.8h-2.2zM154.8 395.1h1.8v1.9h-1.8zM203.8 428.3h1.9v1.5h-1.9zM283.6 358.4h2.2v1.5h-2.2zM150.2 371.0h2.1v2.0h-2.1zM150.7 404.0h1.9v1.9h-1.9zM178.6 404.4h1.8v1.9h-1.8zM190.4 455.6h1.7v1.5h-1.7zM258.4 404.8h1.6v1.8h-1.6zM162.5 437.8h2.1v1.9h-2.1zM247.3 388.5h1.8v1.6h-1.8zM288.0 357.8h2.2v1.4h-2.2zM181.9 378.0h2.2v1.7h-2.2zM208.8 448.8h1.7v1.7h-1.7zM232.4 434.0h2.1v1.8h-2.1zM204.0 385.2h1.6v1.9h-1.6zM252.6 432.6h1.6v1.7h-1.6zM269.9 414.0h1.6v1.7h-1.6zM287.2 375.1h1.7v1.6h-1.7zM259.0 444.2h1.6v1.5h-1.6zM188.4 385.2h1.9v1.5h-1.9zM200.9 369.6h2.3v1.8h-2.3zM165.8 457.7h1.6v1.6h-1.6zM302.5 438.6h2.1v1.7h-2.1zM180.4 420.7h1.6v1.5h-1.6zM210.2 351.9h1.8v1.9h-1.8zM257.5 405.1h2.0v1.7h-2.0zM172.0 416.8h1.8v1.8h-1.8zM290.7 397.0h2.0v1.8h-2.0zM215.3 374.1h2.1v1.9h-2.1zM270.0 427.8h2.2v1.8h-2.2zM249.4 399.7h1.8v1.8h-1.8zM165.2 395.8h2.1v1.8h-2.1zM247.6 376.5h1.8v1.7h-1.8zM246.3 394.7h2.0v2.0h-2.0zM178.4 422.6h2.1v1.6h-2.1zM225.9 459.1h1.5v1.7h-1.5zM174.9 437.1h2.3v1.7h-2.3zM165.7 413.5h1.9v1.8h-1.9zM229.4 420.9h2.2v1.7h-2.2zM213.6 456.1h1.7v1.8h-1.7zM210.8 434.9h1.6v2.0h-1.6zM205.1 354.5h1.7v1.6h-1.7zM152.1 395.7h1.8v1.8h-1.8zM204.6 378.2h1.7v1.8h-1.7zM295.7 408.1h1.7v1.9h-1.7zM210.8 372.2h1.6v1.9h-1.6zM275.5 420.3h1.9v1.7h-1.9zM185.0 457.9h1.8v1.8h-1.8zM276.9 441.0h1.9v1.6h-1.9zM235.0 362.3h2.2v1.6h-2.2zM281.9 378.5h1.8v1.6h-1.8zM216.0 369.2h1.5v1.8h-1.5zM193.6 375.9h1.7v1.7h-1.7zM216.4 420.7h2.0v1.6h-2.0zM294.0 445.4h1.5v1.9h-1.5zM290.4 437.4h1.6v1.9h-1.6zM248.1 349.7h1.5v2.0h-1.5zM251.7 376.5h1.6v1.5h-1.6zM186.2 436.5h1.8v1.5h-1.8zM290.1 438.3h1.6v1.9h-1.6zM244.3 437.1h2.0v1.9h-2.0zM272.2 443.6h1.7v1.8h-1.7zM232.3 432.6h1.9v1.9h-1.9zM236.0 378.2h1.7v1.5h-1.7zM226.4 354.7h1.9v1.5h-1.9zM226.2 404.8h1.9v1.9h-1.9zM151.0 443.8h1.9v1.7h-1.9zM253.1 443.8h1.8v1.7h-1.8zM298.9 356.6h2.0v1.8h-2.0zM154.4 417.5h2.0v2.0h-2.0zM201.2 459.9h1.9v1.7h-1.9zM289.1 351.9h2.1v1.8h-2.1zM202.5 446.2h1.8v1.7h-1.8zM231.5 435.8h1.7v1.7h-1.7zM215.5 411.2h2.2v1.6h-2.2zM278.3 394.0h1.9v1.6h-1.9zM228.5 459.1h2.0v1.9h-2.0zM201.3 384.1h1.7v1.8h-1.7zM248.4 437.4h1.5v1.8h-1.5zM287.3 410.2h1.5v1.6h-1.5zM151.0 369.7h2.2v1.8h-2.2zM252.0 437.9h2.2v1.8h-2.2zM245.6 419.5h2.1v1.8h-2.1zM255.6 372.2h2.0v1.7h-2.0zM268.2 359.6h1.6v1.4h-1.6zM270.1 452.2h2.0v1.6h-2.0zM277.5 437.7h1.9v1.6h-1.9zM196.8 396.1h1.8v1.7h-1.8zM249.5 454.5h1.5v1.7h-1.5zM156.1 361.5h2.1v1.7h-2.1zM292.4 398.9h1.5v1.6h-1.5zM241.8 454.9h2.3v1.7h-2.3zM213.9 359.6h2.0v1.5h-2.0zM173.5 349.8h1.5v1.8h-1.5zM168.9 458.2h1.6v1.9h-1.6zM170.0 350.0h2.1v1.5h-2.1zM263.7 369.4h1.5v1.9h-1.5zM260.6 445.5h2.1v1.5h-2.1zM247.4 428.9h1.9v2.0h-1.9zM189.4 457.9h2.1v1.4h-2.1zM152.3 422.2h2.2v1.4h-2.2zM198.2 431.2h1.6v1.9h-1.6zM225.4 354.8h1.8v1.7h-1.8zM218.0 425.2h1.6v1.9h-1.6zM206.3 421.5h2.0v1.7h-2.0zM209.8 437.6h2.3v1.9h-2.3zM237.9 381.3h1.5v2.0h-1.5zM259.0 442.3h1.8v1.8h-1.8zM301.5 442.8h2.0v1.6h-2.0zM216.4 449.2h1.8v1.8h-1.8zM243.3 450.2h2.1v1.6h-2.1zM150.3 378.0h1.8v1.8h-1.8zM276.5 449.2h1.5v1.9h-1.5zM275.8 446.9h2.0v1.6h-2.0zM281.9 440.0h2.0v1.9h-2.0zM203.8 357.7h1.9v1.9h-1.9zM181.1 433.5h2.2v1.5h-2.2zM244.1 425.3h1.9v1.5h-1.9zM189.5 433.6h2.1v1.7h-2.1zM163.6 439.9h2.1v1.5h-2.1zM239.8 450.2h2.2v1.7h-2.2zM223.9 415.2h1.7v1.5h-1.7zM178.0 427.9h1.8v1.7h-1.8zM212.4 407.0h1.6v1.4h-1.6zM304.6 390.6h1.6v1.8h-1.6zM272.0 365.8h2.0v1.6h-2.0zM230.5 350.3h1.5v2.0h-1.5zM284.2 403.4h2.0v1.6h-2.0zM270.8 396.6h2.3v1.9h-2.3zM276.9 457.8h1.7v1.4h-1.7zM181.2 368.6h1.6v1.4h-1.6zM236.4 447.3h1.9v2.0h-1.9zM291.0 355.3h2.0v1.6h-2.0zM168.6 457.4h1.7v1.7h-1.7zM249.3 457.0h2.0v1.6h-2.0zM219.5 366.2h2.3v2.0h-2.3zM184.4 352.4h1.7v1.6h-1.7zM289.9 451.1h2.2v1.4h-2.2zM271.9 428.9h2.0v2.0h-2.0zM158.6 364.5h2.1v2.0h-2.1zM254.9 382.1h2.0v1.9h-2.0zM166.3 384.9h1.7v1.5h-1.7zM224.6 367.2h1.7v1.5h-1.7zM255.0 349.4h2.1v1.5h-2.1zM155.6 453.8h1.7v2.0h-1.7zM284.3 449.3h1.6v1.7h-1.6zM165.0 453.9h2.2v1.8h-2.2zM220.1 386.7h2.2v1.7h-2.2zM247.4 364.3h1.7v1.4h-1.7zM260.6 411.1h1.6v1.9h-1.6zM191.3 394.9h1.6v1.6h-1.6zM280.1 386.1h1.6v1.7h-1.6zM199.3 451.0h1.6v2.0h-1.6zM158.8 450.0h2.0v1.5h-2.0zM224.0 380.6h1.7v1.5h-1.7zM206.5 461.0h2.3v2.0h-2.3zM165.1 381.0h2.2v1.4h-2.2zM262.6 381.5h2.3v1.4h-2.3zM275.1 386.9h1.6v1.4h-1.6zM279.0 408.0h1.6v1.7h-1.6zM291.4 372.9h2.0v1.5h-2.0zM177.9 435.8h2.1v1.5h-2.1zM162.3 358.0h2.0v1.7h-2.0zM192.5 371.5h2.0v1.8h-2.0zM275.8 414.5h1.7v1.4h-1.7zM263.6 394.5h2.1v1.4h-2.1zM275.7 386.2h2.2v1.9h-2.2zM226.4 349.8h2.2v1.7h-2.2zM285.2 378.4h1.6v1.9h-1.6zM206.9 366.6h1.8v1.8h-1.8zM150.7 407.3h1.9v1.7h-1.9zM168.7 429.5h2.2v1.9h-2.2zM199.8 429.1h1.8v1.9h-1.8zM159.5 447.5h2.3v1.7h-2.3zM229.6 408.5h1.9v1.4h-1.9zM300.0 373.5h1.6v1.5h-1.6zM188.8 441.2h1.5v1.5h-1.5zM258.3 370.2h1.5v1.8h-1.5zM239.4 407.6h2.1v1.5h-2.1zM284.8 429.7h1.5v1.5h-1.5zM226.5 405.1h1.7v1.5h-1.7zM212.9 363.6h2.0v1.9h-2.0zM172.8 413.3h2.1v1.5h-2.1zM278.0 454.9h1.8v1.7h-1.8zM280.2 407.9h1.8v2.0h-1.8zM270.4 386.6h1.7v1.6h-1.7zM217.5 459.9h2.1v1.9h-2.1zM276.3 444.6h1.5v1.7h-1.5zM298.5 454.5h1.7v1.7h-1.7zM248.1 389.5h1.9v1.4h-1.9zM217.1 405.5h1.5v1.5h-1.5zM300.3 436.5h2.2v1.8h-2.2zM275.4 448.8h2.2v1.4h-2.2zM249.4 378.3h2.0v1.6h-2.0zM234.0 453.4h2.0v1.6h-2.0zM230.6 397.4h2.3v1.6h-2.3zM197.3 421.8h1.6v1.8h-1.6zM298.2 406.6h1.7v1.7h-1.7zM232.7 364.9h1.6v1.5h-1.6zM195.5 394.3h1.7v1.5h-1.7zM163.6 410.3h2.2v1.8h-2.2zM238.4 422.1h1.7v1.8h-1.7zM221.4 410.5h2.0v1.7h-2.0zM198.1 375.6h1.7v1.7h-1.7zM209.4 414.8h1.5v1.6h-1.5zM283.6 375.2h1.9v1.7h-1.9zM194.1 460.6h1.7v1.9h-1.7zM174.6 355.6h2.2v1.7h-2.2zM159.6 392.2h1.9v1.8h-1.9zM166.9 373.7h2.3v1.8h-2.3zM174.0 386.4h1.8v1.8h-1.8zM245.5 444.9h2.2v1.7h-2.2zM264.5 432.7h2.1v1.7h-2.1zM271.7 428.8h2.2v1.5h-2.2zM285.0 348.5h2.1v1.8h-2.1zM227.2 457.8h2.0v1.7h-2.0zM271.5 447.5h2.0v1.6h-2.0zM220.1 400.2h2.1v1.6h-2.1zM210.6 411.3h1.8v1.6h-1.8zM272.0 444.9h1.9v1.7h-1.9zM178.6 382.7h1.6v1.7h-1.6zM240.1 358.0h2.2v1.6h-2.2zM280.7 443.5h2.3v1.5h-2.3zM216.1 451.8h1.5v1.4h-1.5zM237.6 404.7h2.2v1.9h-2.2zM233.5 461.8h1.9v1.7h-1.9zM256.2 392.4h1.8v1.8h-1.8zM204.4 456.1h2.0v1.7h-2.0zM165.3 390.7h1.8v1.7h-1.8zM239.0 448.3h2.3v1.7h-2.3zM218.2 419.2h2.3v1.6h-2.3zM232.2 441.0h1.6v1.6h-1.6zM301.7 442.2h1.9v1.5h-1.9zM288.6 426.6h2.2v2.0h-2.2zM287.7 396.0h1.6v1.6h-1.6zM229.3 405.6h1.7v1.5h-1.7zM247.7 416.8h1.8v2.0h-1.8zM248.7 352.8h1.8v1.9h-1.8zM197.5 426.7h1.5v1.6h-1.5zM280.5 414.8h2.0v1.5h-2.0zM227.2 411.1h1.7v1.8h-1.7zM232.4 461.7h2.0v1.6h-2.0zM168.8 365.9h2.1v1.5h-2.1zM165.5 367.4h1.9v1.9h-1.9zM245.0 440.0h1.5v1.4h-1.5zM269.4 384.8h2.1v1.6h-2.1zM176.3 378.4h1.6v1.9h-1.6zM240.3 387.8h1.9v1.6h-1.9zM158.5 449.5h2.0v2.0h-2.0zM218.1 418.7h1.7v1.4h-1.7zM294.3 445.4h1.8v1.9h-1.8zM276.5 382.6h2.0v2.0h-2.0zM226.8 456.3h1.7v1.6h-1.7zM261.4 373.2h1.7v1.9h-1.7zM225.1 438.4h1.7v1.5h-1.7zM205.6 369.3h2.3v1.6h-2.3zM237.0 361.1h1.9v1.6h-1.9zM212.5 355.5h1.6v1.9h-1.6zM204.4 375.9h1.7v1.6h-1.7zM186.8 352.0h2.0v1.6h-2.0zM174.2 428.5h1.6v1.6h-1.6zM279.4 362.6h1.9v1.9h-1.9zM274.8 366.2h1.8v1.8h-1.8zM208.4 457.3h1.7v2.0h-1.7zM228.2 373.9h1.9v1.5h-1.9zM259.5 377.7h2.2v1.8h-2.2zM207.0 376.1h2.0v1.5h-2.0zM285.2 362.0h1.9v1.7h-1.9zM191.9 436.0h1.8v1.8h-1.8zM238.0 383.4h1.8v1.5h-1.8zM177.4 445.0h1.8v1.8h-1.8zM166.9 412.1h1.8v1.7h-1.8zM196.0 355.5h1.7v1.5h-1.7zM169.6 429.7h1.7v1.6h-1.7zM290.9 436.3h2.2v1.9h-2.2zM170.5 379.5h1.5v1.8h-1.5zM252.9 388.1h1.8v1.8h-1.8zM258.4 376.3h2.2v1.6h-2.2zM247.5 368.7h1.6v1.9h-1.6zM263.8 429.2h1.5v1.4h-1.5zM175.1 370.6h1.7v1.6h-1.7zM156.1 383.4h2.0v1.5h-2.0zM280.1 413.0h2.1v1.6h-2.1zM217.4 426.0h1.8v1.4h-1.8zM279.3 436.5h1.7v1.4h-1.7zM282.4 417.2h1.5v1.5h-1.5zM167.2 438.2h1.7v1.9h-1.7zM266.2 357.8h2.1v1.6h-2.1zM265.9 442.5h1.7v1.5h-1.7zM296.7 396.3h2.2v1.8h-2.2zM264.5 442.6h2.0v1.7h-2.0zM158.4 427.6h1.8v1.7h-1.8zM293.9 362.6h2.1v1.4h-2.1zM258.9 439.9h1.7v1.7h-1.7zM300.3 420.7h1.9v1.5h-1.9zM159.2 388.8h1.8v1.5h-1.8zM198.1 363.6h2.1v1.8h-2.1zM186.9 375.6h1.9v1.7h-1.9zM295.1 388.1h1.7v1.9h-1.7zM172.0 412.2h1.8v1.9h-1.8zM235.0 434.7h1.6v1.8h-1.6zM242.8 400.6h2.1v1.9h-2.1zM167.7 381.0h1.8v1.5h-1.8zM159.4 380.0h1.7v1.8h-1.7zM219.4 360.9h1.8v1.7h-1.8zM206.3 367.2h1.6v1.4h-1.6zM303.8 433.6h1.6v1.8h-1.6zM301.9 412.3h1.6v1.7h-1.6zM217.3 369.6h1.9v1.4h-1.9zM292.5 421.5h2.0v2.0h-2.0zM251.2 376.7h1.7v1.5h-1.7zM154.3 436.3h2.2v1.6h-2.2zM178.8 420.7h2.2v2.0h-2.2z" fill="#000" clip-path="url(#lvc)"/>
<path d="M158.5 436.0l4.5 -8.4M159.3 432.2l6.5 -8.2M160.2 428.5l5.0 -6.6M161.0 424.7l6.5 -7.0M161.9 421.0l5.1 -7.7M162.7 417.2l5.1 -8.5M163.6 413.5l4.7 -6.1M164.4 409.7l5.7 -7.9M165.3 405.9l6.5 -8.1M166.1 402.2l6.7 -8.8M167.0 398.4l5.5 -7.5M167.8 394.7l4.5 -6.9M168.7 390.9l5.7 -6.2M169.5 387.2l6.1 -6.5M170.4 383.4l5.3 -8.9M171.2 379.6l4.3 -6.1M172.1 375.9l5.3 -6.6M174.3 373.6l6.2 -6.0M177.8 372.7l6.5 -8.6M181.3 371.9l6.4 -7.3M184.8 371.0l4.8 -8.0M188.3 370.2l5.5 -7.3M191.8 369.3l5.0 -7.3M195.3 368.5l6.0 -8.5M198.9 367.6l6.7 -6.5M202.4 366.8l4.9 -7.3M205.9 365.9l5.7 -7.0M209.4 365.1l4.6 -6.3M212.9 364.2l5.0 -7.4M216.4 363.4l6.9 -8.7M220.0 362.5l6.6 -8.9M223.5 361.7l6.9 -7.9M227.0 360.8l6.4 -6.2M230.5 360.0l6.0 -7.8M242.0 364.0l4.0 -6.0M246.2 363.3l4.0 -6.0M250.4 362.6l4.0 -6.0M254.6 361.9l4.0 -6.0M258.8 361.2l4.0 -6.0M263.0 360.5l4.0 -6.0M267.2 359.8l4.0 -6.0M271.4 359.1l4.0 -6.0M275.6 358.4l4.0 -6.0M279.8 357.7l4.0 -6.0M284.0 357.0l4.0 -6.0M288.2 356.3l4.0 -6.0M292.4 355.6l4.0 -6.0M296.6 354.9l4.0 -6.0" stroke="#000" stroke-width="1.1" fill="none" clip-path="url(#lvc)"/>
<path d="M162 382c5-7 12-11 20-15M160 404c2-10 6-19 12-27M159 425c1-12 4-22 9-30" fill="none" stroke="#000" stroke-width="1.3" clip-path="url(#lvc)"/>
<g filter="url(#rough)"><path d="M227.5 360c4 3 7.5 7 8.5 11.5c-1 6-2.2 11-1.8 16c0 6 1.6 12 1.2 18c-2 3-5 5.5-7.5 6.5" fill="none" stroke="#000" stroke-width="3"/></g>
<path d="M442.0 358.0C441.2 355.3 442.3 351.9 443.5 350.0C444.7 348.1 446.8 347.0 449.0 346.5C451.2 346.0 454.7 347.2 457.0 347.0C459.3 346.8 459.8 346.2 463.0 345.0C466.2 343.8 471.7 339.2 476.0 340.0C480.3 340.8 485.8 346.8 489.0 350.0C492.2 353.2 494.8 356.3 495.0 359.0C495.2 361.7 491.3 362.3 490.0 366.0C488.7 369.7 486.5 376.2 487.0 381.0C487.5 385.8 491.3 389.8 493.0 395.0C494.7 400.2 496.8 407.8 497.0 412.0C497.2 416.2 495.8 417.3 494.0 420.0C492.2 422.7 490.0 428.0 486.0 428.0C482.0 428.0 474.3 428.0 470.0 420.0C465.7 412.0 463.7 389.0 460.0 380.0C456.3 371.0 451.0 369.7 448.0 366.0C445.0 362.3 442.8 360.7 442.0 358.0z" fill="#9CAFB2" filter="url(#rough2)"/>
<clipPath id="htc"><path d="M430.0 452.0C431.6 450.9 439.5 450.7 441.0 452.0C442.5 453.3 441.6 458.8 441.5 462.0C441.4 465.2 441.2 473.5 440.5 476.0C439.8 478.5 437.7 480.5 436.0 481.0C434.3 481.5 429.3 480.7 428.0 479.5C426.7 478.3 425.9 474.6 426.0 472.0C426.1 469.4 428.5 462.7 429.0 460.0C429.5 457.3 428.4 453.1 430.0 452.0z"/><path d="M420.9 386.0C423.5 384.6 427.0 383.9 430.0 383.0C433.0 382.1 437.2 380.8 441.0 380.0C444.8 379.2 450.9 377.7 455.0 378.0C459.1 378.3 465.8 378.8 468.6 381.9C471.4 385.0 472.2 394.9 473.7 398.6C475.2 402.3 477.6 403.0 478.6 406.5C479.6 410.0 479.3 418.0 480.2 421.9C481.1 425.8 484.3 429.4 484.8 432.2C485.3 435.0 484.7 437.2 483.7 440.3C482.7 443.4 480.1 450.0 478.0 453.0C475.9 456.0 472.9 458.8 469.9 460.0C466.9 461.2 462.1 461.4 458.3 461.0C454.5 460.6 449.0 458.5 444.5 457.6C440.0 456.7 432.4 457.0 428.4 455.3C424.4 453.6 420.8 449.1 418.0 446.0C415.2 442.9 412.2 438.1 410.0 434.6C407.8 431.2 404.1 426.1 403.0 423.0C401.9 419.9 402.4 417.2 402.7 414.2C403.0 411.2 403.4 406.5 404.9 403.2C406.4 399.9 410.2 394.8 412.6 392.2C415.0 389.6 418.3 387.4 420.9 386.0z"/><path d="M417.0 365.0C416.9 363.7 419.0 360.8 420.0 360.0C421.0 359.2 425.7 357.6 427.0 357.5C428.3 357.4 432.0 358.1 433.0 358.5C434.0 358.9 436.3 361.1 437.0 362.0C437.7 362.9 439.6 366.6 440.0 368.0C440.4 369.4 441.0 374.0 441.0 376.0C441.0 378.0 440.8 386.6 440.0 388.0C439.2 389.4 434.3 390.6 433.0 390.0C431.7 389.4 428.2 383.7 427.0 382.0C425.8 380.3 422.0 374.7 421.0 373.0C420.0 371.3 417.1 366.3 417.0 365.0z"/><path d="M443.0 378.0C442.8 375.7 443.3 369.0 443.5 367.0C443.7 365.0 444.4 359.4 445.0 358.0C445.6 356.6 448.0 353.2 449.0 352.5C450.0 351.8 453.8 351.4 455.0 351.0C456.2 350.6 459.5 347.9 461.0 348.0C462.5 348.1 468.3 351.1 470.0 352.0C471.7 352.9 476.8 355.9 478.0 357.0C479.2 358.1 481.5 361.7 482.0 363.0C482.5 364.3 483.4 368.7 483.0 370.0C482.6 371.3 479.5 375.0 478.0 376.0C476.5 377.0 470.2 379.2 468.0 380.0C465.8 380.8 458.2 383.0 456.0 384.0C453.8 385.0 447.3 390.6 446.0 390.0C444.7 389.4 443.2 380.3 443.0 378.0z"/></clipPath>
<g fill="#000" stroke="#000" stroke-width="5.5" filter="url(#rough)"><path d="M430.0 452.0C431.6 450.9 439.5 450.7 441.0 452.0C442.5 453.3 441.6 458.8 441.5 462.0C441.4 465.2 441.2 473.5 440.5 476.0C439.8 478.5 437.7 480.5 436.0 481.0C434.3 481.5 429.3 480.7 428.0 479.5C426.7 478.3 425.9 474.6 426.0 472.0C426.1 469.4 428.5 462.7 429.0 460.0C429.5 457.3 428.4 453.1 430.0 452.0z"/><path d="M420.9 386.0C423.5 384.6 427.0 383.9 430.0 383.0C433.0 382.1 437.2 380.8 441.0 380.0C444.8 379.2 450.9 377.7 455.0 378.0C459.1 378.3 465.8 378.8 468.6 381.9C471.4 385.0 472.2 394.9 473.7 398.6C475.2 402.3 477.6 403.0 478.6 406.5C479.6 410.0 479.3 418.0 480.2 421.9C481.1 425.8 484.3 429.4 484.8 432.2C485.3 435.0 484.7 437.2 483.7 440.3C482.7 443.4 480.1 450.0 478.0 453.0C475.9 456.0 472.9 458.8 469.9 460.0C466.9 461.2 462.1 461.4 458.3 461.0C454.5 460.6 449.0 458.5 444.5 457.6C440.0 456.7 432.4 457.0 428.4 455.3C424.4 453.6 420.8 449.1 418.0 446.0C415.2 442.9 412.2 438.1 410.0 434.6C407.8 431.2 404.1 426.1 403.0 423.0C401.9 419.9 402.4 417.2 402.7 414.2C403.0 411.2 403.4 406.5 404.9 403.2C406.4 399.9 410.2 394.8 412.6 392.2C415.0 389.6 418.3 387.4 420.9 386.0z"/><path d="M417.0 365.0C416.9 363.7 419.0 360.8 420.0 360.0C421.0 359.2 425.7 357.6 427.0 357.5C428.3 357.4 432.0 358.1 433.0 358.5C434.0 358.9 436.3 361.1 437.0 362.0C437.7 362.9 439.6 366.6 440.0 368.0C440.4 369.4 441.0 374.0 441.0 376.0C441.0 378.0 440.8 386.6 440.0 388.0C439.2 389.4 434.3 390.6 433.0 390.0C431.7 389.4 428.2 383.7 427.0 382.0C425.8 380.3 422.0 374.7 421.0 373.0C420.0 371.3 417.1 366.3 417.0 365.0z"/><path d="M443.0 378.0C442.8 375.7 443.3 369.0 443.5 367.0C443.7 365.0 444.4 359.4 445.0 358.0C445.6 356.6 448.0 353.2 449.0 352.5C450.0 351.8 453.8 351.4 455.0 351.0C456.2 350.6 459.5 347.9 461.0 348.0C462.5 348.1 468.3 351.1 470.0 352.0C471.7 352.9 476.8 355.9 478.0 357.0C479.2 358.1 481.5 361.7 482.0 363.0C482.5 364.3 483.4 368.7 483.0 370.0C482.6 371.3 479.5 375.0 478.0 376.0C476.5 377.0 470.2 379.2 468.0 380.0C465.8 380.8 458.2 383.0 456.0 384.0C453.8 385.0 447.3 390.6 446.0 390.0C444.7 389.4 443.2 380.3 443.0 378.0z"/></g>
<g fill="#000" stroke="#000" stroke-width="4.6" filter="url(#rough)"><path d="M417.0 365.0C416.9 363.7 419.0 360.8 420.0 360.0C421.0 359.2 425.7 357.6 427.0 357.5C428.3 357.4 432.0 358.1 433.0 358.5C434.0 358.9 436.3 361.1 437.0 362.0C437.7 362.9 439.6 366.6 440.0 368.0C440.4 369.4 441.0 374.0 441.0 376.0C441.0 378.0 440.8 386.6 440.0 388.0C439.2 389.4 434.3 390.6 433.0 390.0C431.7 389.4 428.2 383.7 427.0 382.0C425.8 380.3 422.0 374.7 421.0 373.0C420.0 371.3 417.1 366.3 417.0 365.0z"/><path d="M443.0 378.0C442.8 375.7 443.3 369.0 443.5 367.0C443.7 365.0 444.4 359.4 445.0 358.0C445.6 356.6 448.0 353.2 449.0 352.5C450.0 351.8 453.8 351.4 455.0 351.0C456.2 350.6 459.5 347.9 461.0 348.0C462.5 348.1 468.3 351.1 470.0 352.0C471.7 352.9 476.8 355.9 478.0 357.0C479.2 358.1 481.5 361.7 482.0 363.0C482.5 364.3 483.4 368.7 483.0 370.0C482.6 371.3 479.5 375.0 478.0 376.0C476.5 377.0 470.2 379.2 468.0 380.0C465.8 380.8 458.2 383.0 456.0 384.0C453.8 385.0 447.3 390.6 446.0 390.0C444.7 389.4 443.2 380.3 443.0 378.0z"/></g>
<g fill="#FF0000" filter="url(#rough)"><path d="M430.0 452.0C431.6 450.9 439.5 450.7 441.0 452.0C442.5 453.3 441.6 458.8 441.5 462.0C441.4 465.2 441.2 473.5 440.5 476.0C439.8 478.5 437.7 480.5 436.0 481.0C434.3 481.5 429.3 480.7 428.0 479.5C426.7 478.3 425.9 474.6 426.0 472.0C426.1 469.4 428.5 462.7 429.0 460.0C429.5 457.3 428.4 453.1 430.0 452.0z"/><path d="M420.9 386.0C423.5 384.6 427.0 383.9 430.0 383.0C433.0 382.1 437.2 380.8 441.0 380.0C444.8 379.2 450.9 377.7 455.0 378.0C459.1 378.3 465.8 378.8 468.6 381.9C471.4 385.0 472.2 394.9 473.7 398.6C475.2 402.3 477.6 403.0 478.6 406.5C479.6 410.0 479.3 418.0 480.2 421.9C481.1 425.8 484.3 429.4 484.8 432.2C485.3 435.0 484.7 437.2 483.7 440.3C482.7 443.4 480.1 450.0 478.0 453.0C475.9 456.0 472.9 458.8 469.9 460.0C466.9 461.2 462.1 461.4 458.3 461.0C454.5 460.6 449.0 458.5 444.5 457.6C440.0 456.7 432.4 457.0 428.4 455.3C424.4 453.6 420.8 449.1 418.0 446.0C415.2 442.9 412.2 438.1 410.0 434.6C407.8 431.2 404.1 426.1 403.0 423.0C401.9 419.9 402.4 417.2 402.7 414.2C403.0 411.2 403.4 406.5 404.9 403.2C406.4 399.9 410.2 394.8 412.6 392.2C415.0 389.6 418.3 387.4 420.9 386.0z"/><path d="M417.0 365.0C416.9 363.7 419.0 360.8 420.0 360.0C421.0 359.2 425.7 357.6 427.0 357.5C428.3 357.4 432.0 358.1 433.0 358.5C434.0 358.9 436.3 361.1 437.0 362.0C437.7 362.9 439.6 366.6 440.0 368.0C440.4 369.4 441.0 374.0 441.0 376.0C441.0 378.0 440.8 386.6 440.0 388.0C439.2 389.4 434.3 390.6 433.0 390.0C431.7 389.4 428.2 383.7 427.0 382.0C425.8 380.3 422.0 374.7 421.0 373.0C420.0 371.3 417.1 366.3 417.0 365.0z"/><path d="M443.0 378.0C442.8 375.7 443.3 369.0 443.5 367.0C443.7 365.0 444.4 359.4 445.0 358.0C445.6 356.6 448.0 353.2 449.0 352.5C450.0 351.8 453.8 351.4 455.0 351.0C456.2 350.6 459.5 347.9 461.0 348.0C462.5 348.1 468.3 351.1 470.0 352.0C471.7 352.9 476.8 355.9 478.0 357.0C479.2 358.1 481.5 361.7 482.0 363.0C482.5 364.3 483.4 368.7 483.0 370.0C482.6 371.3 479.5 375.0 478.0 376.0C476.5 377.0 470.2 379.2 468.0 380.0C465.8 380.8 458.2 383.0 456.0 384.0C453.8 385.0 447.3 390.6 446.0 390.0C444.7 389.4 443.2 380.3 443.0 378.0z"/></g>
<path d="M439 374l3-5l2.5 1l-.5 20l-5-2z" fill="#000" filter="url(#rough2)"/>
<rect x="398" y="345" width="92" height="140" fill="#000" filter="url(#blots)" clip-path="url(#htc)"/>
<g fill="none" stroke="#000" stroke-width="4.5" clip-path="url(#htc)" filter="url(#rough2)"><path d="M430.0 452.0C431.6 450.9 439.5 450.7 441.0 452.0C442.5 453.3 441.6 458.8 441.5 462.0C441.4 465.2 441.2 473.5 440.5 476.0C439.8 478.5 437.7 480.5 436.0 481.0C434.3 481.5 429.3 480.7 428.0 479.5C426.7 478.3 425.9 474.6 426.0 472.0C426.1 469.4 428.5 462.7 429.0 460.0C429.5 457.3 428.4 453.1 430.0 452.0z"/><path d="M420.9 386.0C423.5 384.6 427.0 383.9 430.0 383.0C433.0 382.1 437.2 380.8 441.0 380.0C444.8 379.2 450.9 377.7 455.0 378.0C459.1 378.3 465.8 378.8 468.6 381.9C471.4 385.0 472.2 394.9 473.7 398.6C475.2 402.3 477.6 403.0 478.6 406.5C479.6 410.0 479.3 418.0 480.2 421.9C481.1 425.8 484.3 429.4 484.8 432.2C485.3 435.0 484.7 437.2 483.7 440.3C482.7 443.4 480.1 450.0 478.0 453.0C475.9 456.0 472.9 458.8 469.9 460.0C466.9 461.2 462.1 461.4 458.3 461.0C454.5 460.6 449.0 458.5 444.5 457.6C440.0 456.7 432.4 457.0 428.4 455.3C424.4 453.6 420.8 449.1 418.0 446.0C415.2 442.9 412.2 438.1 410.0 434.6C407.8 431.2 404.1 426.1 403.0 423.0C401.9 419.9 402.4 417.2 402.7 414.2C403.0 411.2 403.4 406.5 404.9 403.2C406.4 399.9 410.2 394.8 412.6 392.2C415.0 389.6 418.3 387.4 420.9 386.0z"/><path d="M417.0 365.0C416.9 363.7 419.0 360.8 420.0 360.0C421.0 359.2 425.7 357.6 427.0 357.5C428.3 357.4 432.0 358.1 433.0 358.5C434.0 358.9 436.3 361.1 437.0 362.0C437.7 362.9 439.6 366.6 440.0 368.0C440.4 369.4 441.0 374.0 441.0 376.0C441.0 378.0 440.8 386.6 440.0 388.0C439.2 389.4 434.3 390.6 433.0 390.0C431.7 389.4 428.2 383.7 427.0 382.0C425.8 380.3 422.0 374.7 421.0 373.0C420.0 371.3 417.1 366.3 417.0 365.0z"/><path d="M443.0 378.0C442.8 375.7 443.3 369.0 443.5 367.0C443.7 365.0 444.4 359.4 445.0 358.0C445.6 356.6 448.0 353.2 449.0 352.5C450.0 351.8 453.8 351.4 455.0 351.0C456.2 350.6 459.5 347.9 461.0 348.0C462.5 348.1 468.3 351.1 470.0 352.0C471.7 352.9 476.8 355.9 478.0 357.0C479.2 358.1 481.5 361.7 482.0 363.0C482.5 364.3 483.4 368.7 483.0 370.0C482.6 371.3 479.5 375.0 478.0 376.0C476.5 377.0 470.2 379.2 468.0 380.0C465.8 380.8 458.2 383.0 456.0 384.0C453.8 385.0 447.3 390.6 446.0 390.0C444.7 389.4 443.2 380.3 443.0 378.0z"/></g>
<g fill="none" stroke="#000" stroke-width="2.4" clip-path="url(#htc)" filter="url(#rough)"><path d="M440 364c-1 8-4 16-12 22M422 388c-7 10-9 22-7 34M441 376c4 6 4 14 3 22M459 366c4 3 8 5 12 4M462 372c-3-3-7-2-9 1M470 383c4 8 6 16 6 26M452 420c4 6 10 12 18 14M430 420c4 8 6 16 5 26M413 400c4 6 6 14 5 22M456 440c6 4 12 6 20 4"/></g>
<path d="M690.0 341.7C691.1 338.1 699.2 339.2 706.7 338.4C714.2 337.6 728.6 335.6 735.0 336.7C741.4 337.8 741.9 341.4 745.0 345.0C748.1 348.6 751.5 353.7 753.5 358.4C755.5 363.1 756.5 368.4 756.8 373.4C757.0 378.4 756.5 384.1 755.0 388.5C753.5 392.9 750.5 395.6 748.0 400.0C745.5 404.4 744.9 410.2 740.0 415.0C735.1 419.8 723.1 427.8 718.4 428.6C713.7 429.4 714.8 431.4 711.7 420.0C708.6 408.6 703.6 373.1 700.0 360.0C696.4 346.9 688.9 345.3 690.0 341.7z" fill="#9CAFB2" filter="url(#rough2)"/>
<clipPath id="brc"><path d="M636.8 399.0C636.6 395.2 637.4 389.4 638.0 386.0C638.6 382.6 639.6 378.9 641.0 376.0C642.4 373.1 644.9 369.6 647.0 367.0C649.1 364.4 651.9 361.6 655.0 359.0C658.1 356.4 663.6 351.7 668.0 350.0C672.4 348.3 679.5 347.9 684.0 347.5C688.5 347.1 693.8 347.9 698.0 347.5C702.2 347.1 708.1 345.1 712.0 344.5C715.9 343.9 720.1 342.4 724.0 343.8C727.9 345.2 734.8 351.1 737.8 353.7C740.8 356.3 742.5 358.6 744.0 361.0C745.5 363.4 747.1 365.8 748.0 370.0C748.9 374.2 750.0 383.4 749.7 389.0C749.4 394.6 748.1 402.5 745.7 407.0C743.3 411.5 738.2 416.8 734.0 419.0C729.8 421.2 723.1 421.4 718.0 422.0C712.9 422.6 705.4 423.0 700.0 423.0C694.6 423.0 687.0 422.0 682.0 422.0C677.0 422.0 671.5 423.4 666.5 423.0C661.5 422.6 652.8 420.8 648.7 419.0C644.6 417.2 640.8 414.0 639.0 411.0C637.2 408.0 636.9 402.8 636.8 399.0z"/></clipPath>
<path d="M683 430l-7 5M684 435l-8 7M684 441l-8 7M685 447l-7 6M708 429l7 5M707 435l8 7M706 441l7 7M704 447l6 6" stroke="#000" stroke-width="2.3" filter="url(#rough)"/>
<g fill="#000" stroke="#000" stroke-width="4.6" filter="url(#bumpy)"><path d="M636.8 399.0C636.6 395.2 637.4 389.4 638.0 386.0C638.6 382.6 639.6 378.9 641.0 376.0C642.4 373.1 644.9 369.6 647.0 367.0C649.1 364.4 651.9 361.6 655.0 359.0C658.1 356.4 663.6 351.7 668.0 350.0C672.4 348.3 679.5 347.9 684.0 347.5C688.5 347.1 693.8 347.9 698.0 347.5C702.2 347.1 708.1 345.1 712.0 344.5C715.9 343.9 720.1 342.4 724.0 343.8C727.9 345.2 734.8 351.1 737.8 353.7C740.8 356.3 742.5 358.6 744.0 361.0C745.5 363.4 747.1 365.8 748.0 370.0C748.9 374.2 750.0 383.4 749.7 389.0C749.4 394.6 748.1 402.5 745.7 407.0C743.3 411.5 738.2 416.8 734.0 419.0C729.8 421.2 723.1 421.4 718.0 422.0C712.9 422.6 705.4 423.0 700.0 423.0C694.6 423.0 687.0 422.0 682.0 422.0C677.0 422.0 671.5 423.4 666.5 423.0C661.5 422.6 652.8 420.8 648.7 419.0C644.6 417.2 640.8 414.0 639.0 411.0C637.2 408.0 636.9 402.8 636.8 399.0z"/><path d="M680.0 421.0C683.9 419.5 707.1 419.5 711.0 421.0C714.9 422.5 709.8 428.7 709.0 432.0C708.2 435.3 705.9 442.7 705.0 446.0C704.1 449.3 703.5 455.1 702.0 457.0C700.5 458.9 696.1 459.9 694.0 460.0C691.9 460.1 687.3 459.9 686.0 458.0C684.7 456.1 684.6 449.5 684.0 446.0C683.4 442.5 682.0 435.3 681.5 432.0C681.0 428.7 676.1 422.5 680.0 421.0z"/></g>
<g fill="#FFFF00" filter="url(#bumpy)"><path d="M636.8 399.0C636.6 395.2 637.4 389.4 638.0 386.0C638.6 382.6 639.6 378.9 641.0 376.0C642.4 373.1 644.9 369.6 647.0 367.0C649.1 364.4 651.9 361.6 655.0 359.0C658.1 356.4 663.6 351.7 668.0 350.0C672.4 348.3 679.5 347.9 684.0 347.5C688.5 347.1 693.8 347.9 698.0 347.5C702.2 347.1 708.1 345.1 712.0 344.5C715.9 343.9 720.1 342.4 724.0 343.8C727.9 345.2 734.8 351.1 737.8 353.7C740.8 356.3 742.5 358.6 744.0 361.0C745.5 363.4 747.1 365.8 748.0 370.0C748.9 374.2 750.0 383.4 749.7 389.0C749.4 394.6 748.1 402.5 745.7 407.0C743.3 411.5 738.2 416.8 734.0 419.0C729.8 421.2 723.1 421.4 718.0 422.0C712.9 422.6 705.4 423.0 700.0 423.0C694.6 423.0 687.0 422.0 682.0 422.0C677.0 422.0 671.5 423.4 666.5 423.0C661.5 422.6 652.8 420.8 648.7 419.0C644.6 417.2 640.8 414.0 639.0 411.0C637.2 408.0 636.9 402.8 636.8 399.0z"/><path d="M680.0 421.0C683.9 419.5 707.1 419.5 711.0 421.0C714.9 422.5 709.8 428.7 709.0 432.0C708.2 435.3 705.9 442.7 705.0 446.0C704.1 449.3 703.5 455.1 702.0 457.0C700.5 458.9 696.1 459.9 694.0 460.0C691.9 460.1 687.3 459.9 686.0 458.0C684.7 456.1 684.6 449.5 684.0 446.0C683.4 442.5 682.0 435.3 681.5 432.0C681.0 428.7 676.1 422.5 680.0 421.0z"/></g>
<rect x="630" y="340" width="125" height="90" fill="#000" filter="url(#gyri)" clip-path="url(#brc)"/>
<clipPath id="stc"><path d="M680.0 421.0C683.9 419.5 707.1 419.5 711.0 421.0C714.9 422.5 709.8 428.7 709.0 432.0C708.2 435.3 705.9 442.7 705.0 446.0C704.1 449.3 703.5 455.1 702.0 457.0C700.5 458.9 696.1 459.9 694.0 460.0C691.9 460.1 687.3 459.9 686.0 458.0C684.7 456.1 684.6 449.5 684.0 446.0C683.4 442.5 682.0 435.3 681.5 432.0C681.0 428.7 676.1 422.5 680.0 421.0z"/></clipPath>
<rect x="676" y="420" width="40" height="42" fill="#000" filter="url(#blots)" clip-path="url(#stc)" opacity="0.9"/>
<g filter="url(#rough)" fill="none" stroke="#000"><path d="M694 348c-1 10 1 20-1 32c-1 10 0 20 1 30c-1 4-1 8-1 12" stroke-width="1.8"/><path d="M688 424c1 10 1 20 2 32M694.5 424v34M700 424c0 10-1 20-2 32M683 424c2 4 2 8 3 12M706 424c-1 4-2 8-3 12" stroke-width="1.1"/><path d="M670 421c8 2 16 3 26 2c10 0 18-1 25-3" stroke-width="1.6"/></g>
</g>
</svg>
</body></html>
